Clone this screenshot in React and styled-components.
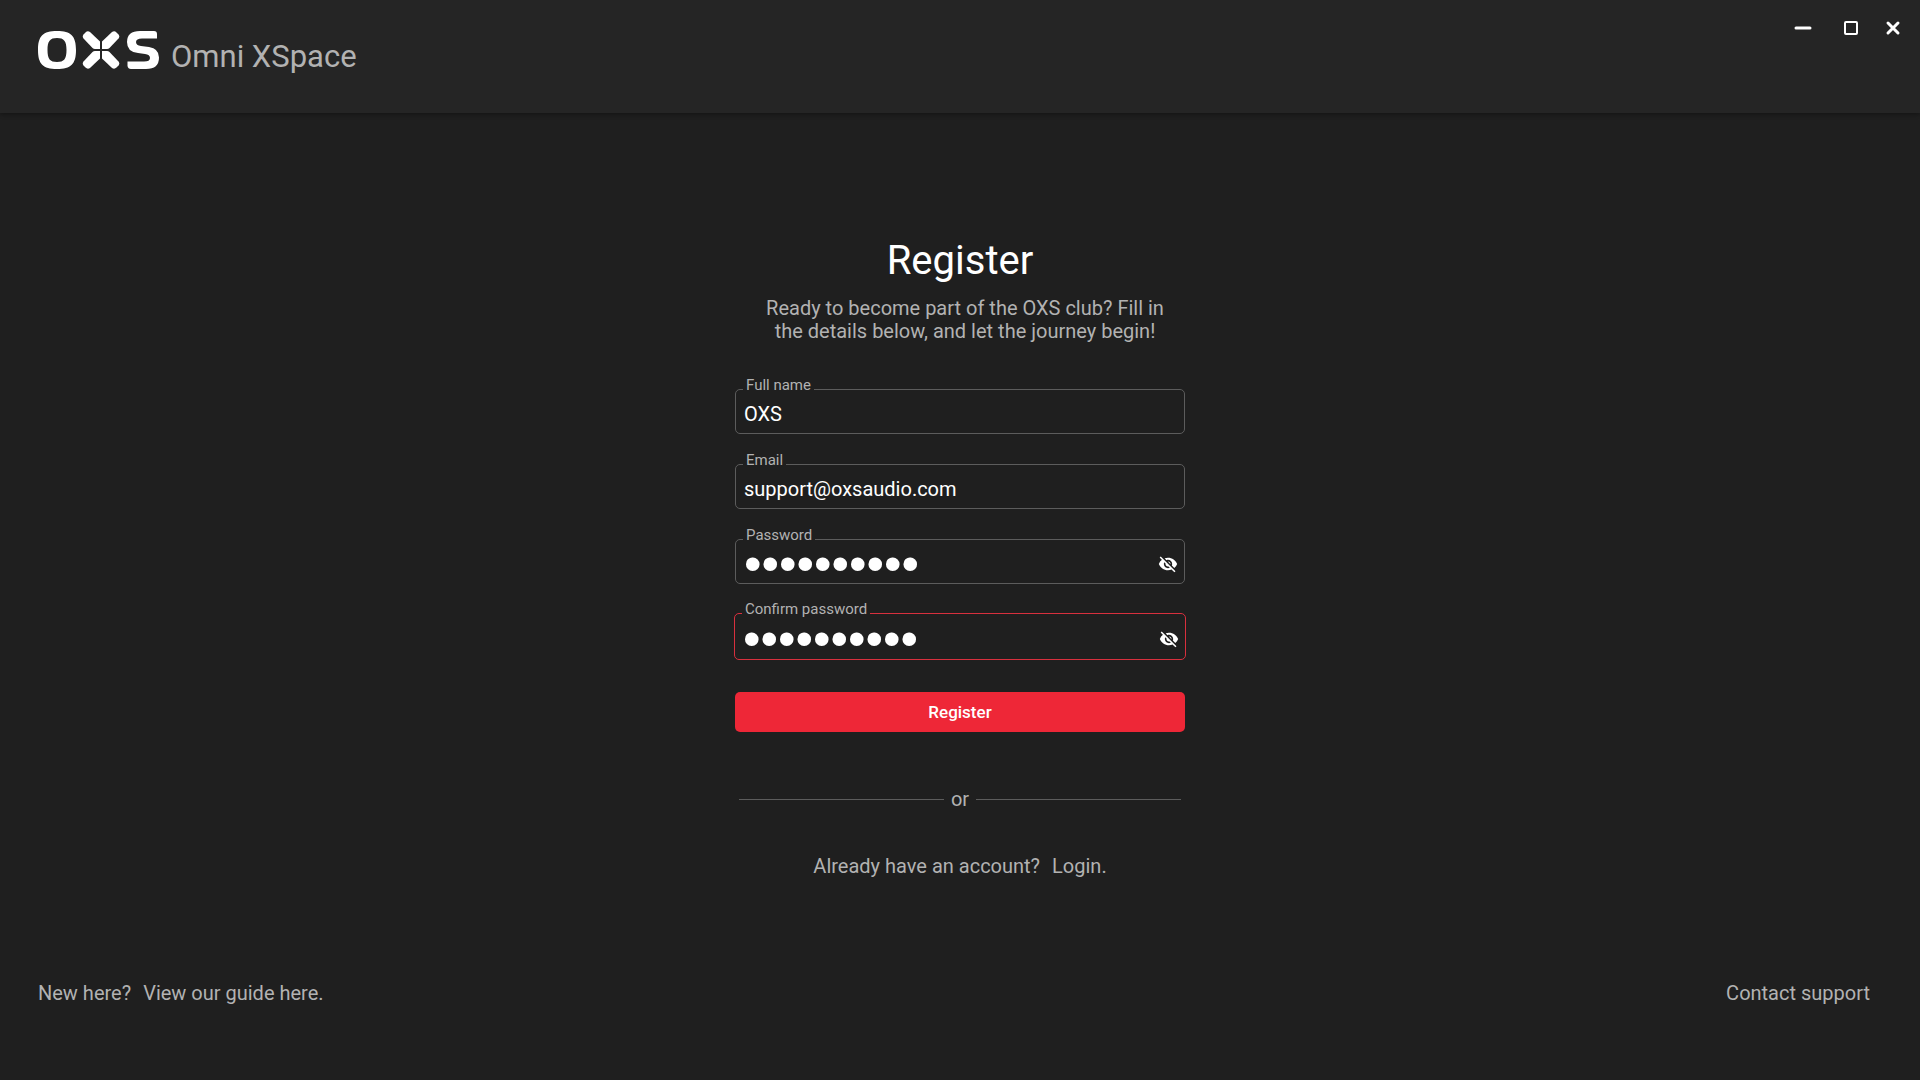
import React, { useState } from "react";
import styled, { createGlobalStyle } from "styled-components";
import { MdVisibility, MdVisibilityOff } from "react-icons/md";

const COLOR = {
  BACKGROUND: "#1f1f1f",
  HEADER: "#252525",
  WHITE: "#ffffff",
  TEXT: "#b2b2b2",
  BORDER: "#5c5c5c",
  RED: "#ee2737",
  ERROR: "#d8303e",
};

const TEXT = {
  S: "font-size: 15px; line-height: 16px;",
  BUTTON: "font-size: 17px; line-height: 24px;",
  M: "font-size: 20px; line-height: 23px;",
  L: "font-size: 31px; line-height: 40px;",
  XL: "font-size: 40px; line-height: 48px;",
};

const Logo = () => (
  <StyledLogo viewBox="0 0 122 38" role="img" aria-label="OXS">
    <path
      fillRule="evenodd"
      d="M19 0C33 0 38 5 38 19C38 33 33 38 19 38C5 38 0 33 0 19C0 5 5 0 19 0ZM19 7C12 7 9.500 10 9.500 19C9.500 28 12 31 19 31C26 31 28.500 28 28.500 19C28.500 10 26 7 19 7Z"
    />
    <path d="M62 18V10.500L52 1Q49.500 -0.500 47.500 1.500L45.500 3.500Q44 5.500 45.500 7.500L54.500 17Q55.500 18 57 18Z" />
    <path d="M64 18V10.500L74 1Q76.500 -0.500 78.500 1.500L80.500 3.500Q82 5.500 80.500 7.500L71.500 17Q70.500 18 69 18Z" />
    <path d="M62 20V27.500L52 37Q49.500 38.500 47.500 36.500L45.500 34.500Q44 32.500 45.500 30.500L54.500 21Q55.500 20 57 20Z" />
    <path d="M64 20V27.500L74 37Q76.500 38.500 78.500 36.500L80.500 34.500Q82 32.500 80.500 30.500L71.500 21Q70.500 20 69 20Z" />
    <path d="M119 7.500H104Q98 7.500 98 11Q98 14.500 103 15L111 16Q121 17.500 121 26.500Q121 38 108 38H93Q90 38 89.500 35V30.500H106Q112 30.500 112 27Q112 23.500 107 23L100 22Q89 21 89 11Q89 0 102 0H116Q119 0 119 3Z" />
  </StyledLogo>
);

const WindowControls = () => (
  <StyledControls>
    <StyledControl type="button" aria-label="Minimize">
      <svg width="18" height="18" viewBox="0 0 18 18">
        <path d="M2 9H16" strokeWidth="3" />
      </svg>
    </StyledControl>
    <StyledControl type="button" aria-label="Maximize">
      <svg width="18" height="18" viewBox="0 0 18 18">
        <rect x="3" y="3" width="12" height="12" rx="1" strokeWidth="2" />
      </svg>
    </StyledControl>
    <StyledControl type="button" aria-label="Close">
      <svg width="18" height="18" viewBox="0 0 18 18">
        <path d="M4 4L14 14M14 4L4 14" strokeWidth="3" />
      </svg>
    </StyledControl>
  </StyledControls>
);

const Field = ({ id, label, defaultValue, type = "text", hasError = false }) => {
  const [isVisible, setIsVisible] = useState(false);
  const isPassword = type === "password";
  const isMasked = isPassword && !isVisible;

  return (
    <StyledField $hasError={hasError}>
      <StyledLabel htmlFor={id}>{label}</StyledLabel>
      <StyledInput
        id={id}
        type={isPassword && isVisible ? "text" : type}
        defaultValue={defaultValue}
        aria-invalid={hasError}
        $isMasked={isMasked}
      />
      {isPassword && (
        <StyledEyeButton
          type="button"
          aria-label={isVisible ? "Hide password" : "Show password"}
          onClick={() => setIsVisible(!isVisible)}
        >
          {isVisible ? <MdVisibility size={20} /> : <MdVisibilityOff size={20} />}
        </StyledEyeButton>
      )}
    </StyledField>
  );
};

export default function App() {
  return (
    <>
      <GlobalStyle />
      <StyledPage>
        <StyledHeader>
          <StyledBrand>
            <Logo />
            <StyledAppName>Omni XSpace</StyledAppName>
          </StyledBrand>
          <WindowControls />
        </StyledHeader>
        <StyledMain>
          <StyledTitle>Register</StyledTitle>
          <StyledIntro>
            Ready to become part of the OXS club? Fill in the details below, and
            let the journey begin!
          </StyledIntro>
          <StyledForm onSubmit={(e) => e.preventDefault()}>
            <Field id="name" label="Full name" defaultValue="OXS" />
            <Field
              id="email"
              label="Email"
              type="email"
              defaultValue="support@oxsaudio.com"
            />
            <Field
              id="password"
              label="Password"
              type="password"
              defaultValue="omnixspace"
            />
            <Field
              id="confirm"
              label="Confirm password"
              type="password"
              defaultValue="omnixspase"
              hasError
            />
            <StyledSubmit type="submit">Register</StyledSubmit>
          </StyledForm>
          <StyledDivider>or</StyledDivider>
          <StyledLine>
            <span>Already have an account?</span>
            <StyledLink href="#login">Login.</StyledLink>
          </StyledLine>
        </StyledMain>
        <StyledFooter>
          <StyledLine>
            <span>New here?</span>
            <StyledLink href="#guide">View our guide here.</StyledLink>
          </StyledLine>
          <StyledLink href="#support">Contact support</StyledLink>
        </StyledFooter>
      </StyledPage>
    </>
  );
}

const GlobalStyle = createGlobalStyle`
  * {
    box-sizing: border-box;
  }

  body {
    margin: 0;
    background: ${COLOR.BACKGROUND};
    color: ${COLOR.TEXT};
    font-family: Roboto, "Liberation Sans", sans-serif;
    ${TEXT.M};
  }

  button,
  input {
    font: inherit;
  }
`;

const StyledPage = styled.div`
  display: flex;
  flex-direction: column;
  min-height: 100vh;
`;

const StyledHeader = styled.header`
  display: flex;
  justify-content: space-between;
  align-items: flex-start;
  padding: 16px 18px 36px 38px;
  background: ${COLOR.HEADER};
  box-shadow: 0 2px 4px rgba(0, 0, 0, 0.3);
`;

const StyledBrand = styled.div`
  display: flex;
  gap: 11px;
  padding-top: 15px;
`;

const StyledLogo = styled.svg`
  width: 122px;
  height: 38px;
  fill: ${COLOR.WHITE};
`;

const StyledAppName = styled.div`
  padding-top: 6px;
  ${TEXT.L};
`;

const StyledControls = styled.div`
  display: flex;
  gap: 24px;
`;

const StyledControl = styled.button`
  display: flex;
  padding: 3px 0 0;
  border: 0;
  background: none;
  cursor: pointer;

  &:first-child {
    margin-right: 6px;
  }

  svg {
    fill: none;
    stroke: ${COLOR.WHITE};
    stroke-linecap: round;
  }
`;

const StyledMain = styled.main`
  display: flex;
  flex: 1;
  flex-direction: column;
  align-items: center;
  width: 100%;
  max-width: 450px;
  margin: 0 auto;
  padding-top: 124px;
`;

const StyledTitle = styled.h1`
  margin: 0;
  color: ${COLOR.WHITE};
  font-weight: 400;
  ${TEXT.XL};
`;

const StyledIntro = styled.p`
  margin: 12px 0 46px;
  padding: 0 20px 0 30px;
  text-align: center;
`;

const StyledForm = styled.form`
  display: flex;
  flex-direction: column;
  gap: 30px;
  width: 100%;
`;

const StyledField = styled.div`
  position: relative;
  display: flex;
  align-items: center;
  height: ${({ $hasError }) => ($hasError ? "47px" : "45px")};
  margin: ${({ $hasError }) => ($hasError ? "-1px" : "0")};
  padding: 0 6px 0 8px;
  border: 1px solid
    ${({ $hasError }) => ($hasError ? COLOR.ERROR : COLOR.BORDER)};
  border-radius: 5px;
`;

const StyledLabel = styled.label`
  position: absolute;
  top: -13px;
  left: 7px;
  padding: 0 3px;
  background: ${COLOR.BACKGROUND};
  ${TEXT.S};
`;

const StyledInput = styled.input`
  flex: 1;
  min-width: 0;
  height: 40px;
  padding: 4px 0 0;
  border: 0;
  outline: 0;
  background: none;
  color: ${COLOR.WHITE};
  ${({ $isMasked }) =>
    $isMasked &&
    `
      font-family: "Liberation Sans", sans-serif;
      font-size: 50px;
      line-height: 36px;
    `}
`;

const StyledEyeButton = styled.button`
  display: flex;
  padding: 4px 0 0;
  border: 0;
  background: none;
  color: ${COLOR.WHITE};
  cursor: pointer;
`;

const StyledSubmit = styled.button`
  margin-top: 3px;
  padding: 8px;
  border: 0;
  border-radius: 5px;
  background: ${COLOR.RED};
  color: ${COLOR.WHITE};
  font-weight: 500;
  cursor: pointer;
  ${TEXT.BUTTON};
`;

const StyledDivider = styled.div`
  display: flex;
  align-items: center;
  gap: 7px;
  width: 100%;
  margin: 56px 0 44px;
  padding: 0 4px;

  &::before,
  &::after {
    content: "";
    flex: 1;
    border-top: 1px solid ${COLOR.BORDER};
  }
`;

const StyledLine = styled.div`
  display: flex;
  gap: 12px;
`;

const StyledLink = styled.a`
  color: inherit;
  text-decoration: none;
`;

const StyledFooter = styled.footer`
  display: flex;
  justify-content: space-between;
  padding: 0 50px 75px 38px;
`;
